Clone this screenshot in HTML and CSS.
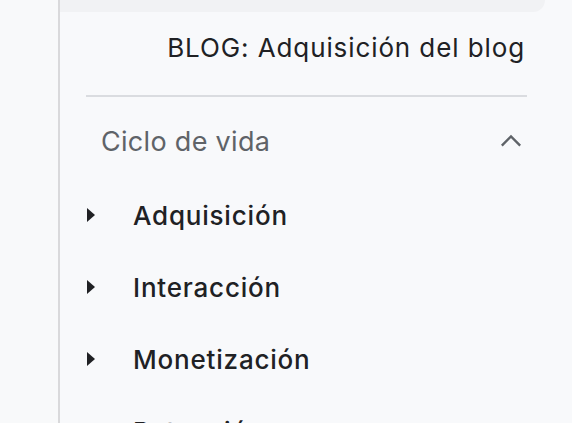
FILE: index.html
```html
<!DOCTYPE html>
<html lang="es">
<head>
    <meta charset="UTF-8">
    <meta name="viewport" content="width=device-width, initial-scale=1.0">
    <title>Informes - Ciclo de vida</title>
    <link rel="stylesheet" href="styles.css">
</head>
<body>
    <div class="layout">
        <aside class="rail"></aside>

        <nav class="nav-panel">
            <div class="top-card"></div>

            <div class="report-title">BLOG: Adquisición del blog</div>

            <hr class="divider">

            <div class="section-header">
                <span>Ciclo de vida</span>
                <svg class="chevron" width="24" height="24" viewBox="0 0 24 24">
                    <path d="M2 17 L12 7 L22 17" fill="none" stroke="#5f6368" stroke-width="2.6"/>
                </svg>
            </div>

            <ul class="nav-list">
                <li class="nav-item">
                    <span class="caret"></span>
                    <span class="nav-label">Adquisición</span>
                </li>
                <li class="nav-item">
                    <span class="caret"></span>
                    <span class="nav-label">Interacción</span>
                </li>
                <li class="nav-item">
                    <span class="caret"></span>
                    <span class="nav-label">Monetización</span>
                </li>
                <li class="nav-item">
                    <span class="caret"></span>
                    <span class="nav-label">Retención</span>
                </li>
            </ul>
        </nav>
    </div>
</body>
</html>
```

FILE: styles.css
```css
html, body {
    margin: 0;
    padding: 0;
    height: 100%;
    overflow: hidden;
}

body {
    font-family: 'Inter', 'Roboto', sans-serif;
    background: #f8f9fa;
    color: #202124;
}

.layout {
    display: flex;
    height: 100%;
}

.rail {
    width: 58px;
    flex-shrink: 0;
    background: #f8f9fa;
    border-right: 2px solid #d9d9db;
}

.nav-panel {
    flex: 1;
    background: #f8f9fb;
}

.top-card {
    height: 12px;
    margin-right: 27px;
    background: #f1f2f4;
    border-bottom-right-radius: 18px;
}

.report-title {
    padding: 18px 47px 29px 0;
    text-align: right;
    font-size: 26px;
    letter-spacing: 0.9px;
    line-height: 36px;
    font-weight: 400;
}

.divider {
    margin: 0 45px 0 26px;
    border: none;
    height: 2px;
    background: #dadce0;
}

.section-header {
    display: flex;
    align-items: center;
    justify-content: space-between;
    height: 72px;
    margin-top: 8px;
    padding: 0 50px 0 41px;
    font-size: 27px;
    letter-spacing: 0.3px;
    color: #5f6368;
}

.chevron {
    width: 22px;
    height: 22px;
}

.nav-list {
    list-style: none;
    margin: 2px 0 0;
    padding: 0;
}

.nav-item {
    display: flex;
    align-items: center;
    height: 72px;
    padding-left: 27px;
}

.caret {
    width: 0;
    height: 0;
    border-top: 7px solid transparent;
    border-bottom: 7px solid transparent;
    border-left: 8px solid #202124;
    margin-right: 38px;
}

.nav-label {
    font-size: 26px;
    letter-spacing: 0.8px;
    font-weight: 500;
}
```
